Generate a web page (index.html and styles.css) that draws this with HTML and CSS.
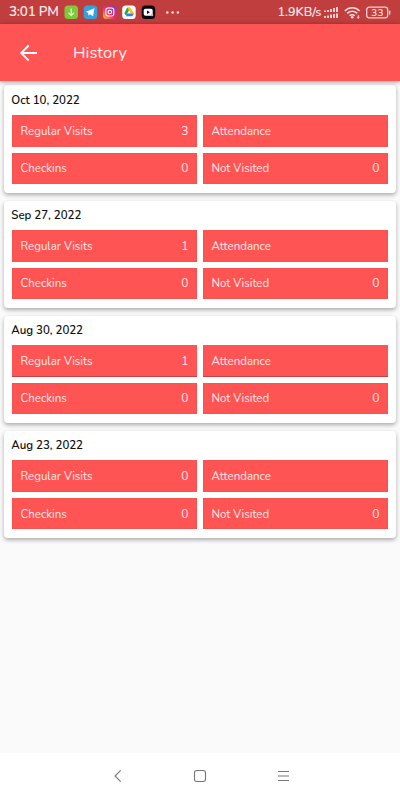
FILE: index.html
```html
<!DOCTYPE html>
<html lang="en">
<head>
<meta charset="utf-8">
<title>History</title>
<link rel="stylesheet" href="styles.css">
</head>
<body>
<div class="status">
  <span class="time">3:01 PM</span>
  <svg class="apps" width="120" height="16" viewBox="0 0 120 16">
    <defs><linearGradient id="insta" x1="0" y1="1" x2="1" y2="0"><stop offset="0" stop-color="#ffc13b"/><stop offset=".45" stop-color="#f02b66"/><stop offset="1" stop-color="#7839dc"/></linearGradient></defs>
    <rect x="0.5" y="1.5" width="13.5" height="13.5" rx="3.5" fill="#7dcb3c"/>
    <path d="M7.2 4.5v7M4.5 8.8l2.7 2.7 2.7-2.7" fill="none" stroke="#e2ffc8" stroke-width="1.2"/>
    <rect x="19.7" y="1.5" width="13.5" height="13.5" rx="3.5" fill="#35a3db"/>
    <path d="M22 7.8l8.5-3.5-1.5 8-3-2-1.5 1.5-.4-2.8z" fill="#fff"/>
    <rect x="39" y="1.5" width="13.5" height="13.5" rx="3.5" fill="url(#insta)"/>
    <rect x="41.8" y="4" width="8" height="8" rx="2.2" fill="none" stroke="#fff" stroke-width="1.1"/>
    <circle cx="45.8" cy="8" r="1.8" fill="none" stroke="#fff" stroke-width="1.1"/>
    <rect x="58.2" y="1.5" width="13.5" height="13.5" rx="3.5" fill="#fff"/>
    <path d="M63 3.7h3.2l-4 8-1.8-2.5z" fill="#26a65b"/><path d="M63.4 3.7h3l3.6 5.8h-3.2z" fill="#fbc315"/><path d="M63.3 9.5h6.7l-1.7 2.8h-6.3z" fill="#3d7de8"/>
    <rect x="77.7" y="1.5" width="13.5" height="13.5" rx="3.5" fill="#080810"/>
    <rect x="79.7" y="4.8" width="9" height="7" rx="1.8" fill="#fff"/><path d="M83 6.5l3 1.8-3 1.8z" fill="#080810"/><circle cx="88" cy="11" r="1.3" fill="#f5a0b8"/>
    <g fill="#f7dada"><circle cx="103.3" cy="8.5" r="1.25"/><circle cx="108.6" cy="8.5" r="1.25"/><circle cx="113.9" cy="8.5" r="1.25"/></g>
  </svg>
  <span class="speed">1.9KB/s</span>
  <svg class="signals" width="68" height="16" viewBox="0 0 68 16">
    <g stroke="#f3cccc" stroke-width="2"><path d="M2 8V6.5M5 8V6M8 8V5M11 8V4M14 8V3"/><path d="M2 14v-2M5 14v-2.5M8 14v-3.5M11 14v-4M14 14v-4.5"/></g>
    <g fill="none" stroke="#f8dada" stroke-width="1.5"><path d="M21.8 7c4.2-4.2 10.6-4.2 14.8 0M24.2 9.4c2.8-2.8 7.2-2.8 10 0M26.6 11.8c1.5-1.5 3.7-1.5 5.2 0"/></g>
    <circle cx="29.2" cy="13.3" r="1.3" fill="#f8dada"/><path d="M35.3 11v4M34 13.2h2.6" stroke="#f8dada" stroke-width=".8"/>
    <rect x="43.7" y="3.2" width="21" height="10.6" rx="2.5" fill="none" stroke="#f5cfcf" stroke-width="1.3"/>
    <path d="M66.7 6.8v3.6" stroke="#f5cfcf" stroke-width="1.4"/>
    <text x="54.2" y="12.2" text-anchor="middle" class="battery">33</text>
  </svg>
</div>
<header class="bar">
  <svg width="20" height="20" viewBox="0 0 20 20"><path d="M18 10H2.6M9.7 2.5L2.2 10l7.5 7.5" fill="none" stroke="#fff" stroke-width="1.8"/></svg>
  <h1>History</h1>
</header>
<main class="list">
  <section class="card"><h2>Oct 10, 2022</h2><div class="grid">
    <div class="tile"><span>Regular Visits</span><b>3</b></div><div class="tile"><span>Attendance</span></div>
    <div class="tile"><span>Checkins</span><b>0</b></div><div class="tile"><span>Not Visited</span><b>0</b></div></div></section>
  <section class="card"><h2>Sep 27, 2022</h2><div class="grid">
    <div class="tile"><span>Regular Visits</span><b>1</b></div><div class="tile"><span>Attendance</span></div>
    <div class="tile"><span>Checkins</span><b>0</b></div><div class="tile"><span>Not Visited</span><b>0</b></div></div></section>
  <section class="card"><h2>Aug 30, 2022</h2><div class="grid">
    <div class="tile edge"><span>Regular Visits</span><b>1</b></div><div class="tile edge"><span>Attendance</span></div>
    <div class="tile"><span>Checkins</span><b>0</b></div><div class="tile"><span>Not Visited</span><b>0</b></div></div></section>
  <section class="card"><h2>Aug 23, 2022</h2><div class="grid">
    <div class="tile"><span>Regular Visits</span><b>0</b></div><div class="tile"><span>Attendance</span></div>
    <div class="tile"><span>Checkins</span><b>0</b></div><div class="tile"><span>Not Visited</span><b>0</b></div></div></section>
</main>
<nav class="nav">
  <svg width="14" height="14" viewBox="0 0 14 14"><path d="M10.7 1.3L5 7l5.7 5.7"/></svg>
  <svg width="14" height="14" viewBox="0 0 14 14"><rect x="1.5" y="1.5" width="11" height="11" rx="2.2"/></svg>
  <svg width="14" height="14" viewBox="0 0 14 14"><path d="M1 2.5h11M1 7h11M1 11.5h11"/></svg>
</nav>
</body>
</html>
```
FILE: styles.css
```css
* { box-sizing: border-box; }
body { margin: 0; height: 800px; display: flex; flex-direction: column; overflow: hidden; background: #fafafa; font-family: Nunito, "Open Sans", sans-serif; }
.status { height: 24px; flex: none; display: flex; align-items: center; background: #c13e3f; color: #fbe9e9; padding-left: 9px; white-space: nowrap; }
.time { width: 55px; font-size: 13.5px; line-height: 24px; font-weight: 600; letter-spacing: -.25px; }
.apps { flex: none; }
.speed { margin-left: 93.5px; width: 45.5px; font-size: 12.6px; line-height: 24px; font-weight: 600; }
.signals { flex: none; }
.battery { font-size: 10.5px; font-weight: 600; fill: #f8dada; }
.bar { height: 57px; flex: none; display: flex; align-items: center; padding-left: 19px; background: #ff5454; box-shadow: 0 1px 5px rgba(0,0,0,.4); z-index: 1; }
.bar h1 { margin: 0 0 0 34px; font-size: 16.5px; line-height: 24px; font-weight: 400; color: #ffeeee; }
.list { flex: 1; padding: 3.5px 4px 0; }
.card { height: 107.1px; margin-bottom: 8px; padding: 7px 8px 0; background: #fff; border-radius: 4px; box-shadow: 0 2px 4px rgba(0,0,0,.32); }
.card:first-child { height: 108.1px; padding-top: 8px; }
.card h2 { margin: -.5px 0 7px -.7px; font-size: 11.5px; line-height: 16px; font-weight: 600; letter-spacing: -.03px; color: #111; }
.grid { display: grid; grid-template-columns: 185px 185px; grid-template-rows: 31.5px 31.5px; gap: 6px; }
.tile { display: flex; align-items: center; justify-content: space-between; padding: 0 8.5px; background: #ff5454; box-shadow: inset 0 0 0 .5px #ed5353; color: #ffe9e9; font-size: 11.5px; line-height: 16px; }
.tile b { font-weight: 400; font-size: 12px; }
.edge { box-shadow: inset 0 -1px #c83f45; }
.nav { height: 47px; flex: none; display: flex; justify-content: center; align-items: center; gap: 69.5px; padding-bottom: 2px; background: #fff; }
.nav svg { fill: none; stroke: #777; stroke-width: 1.1; }
```
